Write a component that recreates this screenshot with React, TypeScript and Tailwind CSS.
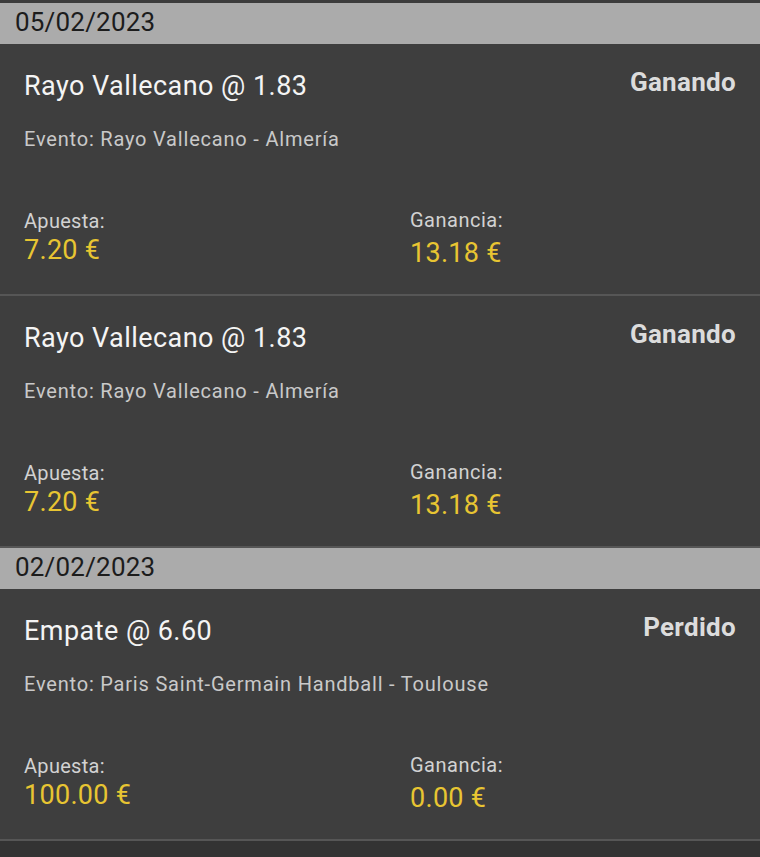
import React from 'react';

type Bet = {
  pick: string;
  odds: string;
  status: string;
  event: string;
  stake: string;
  profit: string;
};

type Day = {
  date: string;
  bets: Bet[];
};

const days: Day[] = [
  {
    date: '05/02/2023',
    bets: [
      { pick: 'Rayo Vallecano', odds: '1.83', status: 'Ganando', event: 'Rayo Vallecano - Almería', stake: '7.20', profit: '13.18' },
      { pick: 'Rayo Vallecano', odds: '1.83', status: 'Ganando', event: 'Rayo Vallecano - Almería', stake: '7.20', profit: '13.18' },
    ],
  },
  {
    date: '02/02/2023',
    bets: [
      { pick: 'Empate', odds: '6.60', status: 'Perdido', event: 'Paris Saint-Germain Handball - Toulouse', stake: '100.00', profit: '0.00' },
    ],
  },
];

function BetCard({ bet }: { bet: Bet }) {
  return (
    <div className="bg-[#3e3e3e] border-b-2 border-[#565656] px-6 pt-[26px] pb-[28px]">
      <div className="flex justify-between items-start">
        <div className="text-[27px] leading-[32px] tracking-[0.45px] text-[#f4f4f4]">
          {bet.pick} @ {bet.odds}
        </div>
        <div className="text-[26px] leading-[32px] font-bold tracking-[0.3px] text-[#dcdcdc] -mt-[4px]">{bet.status}</div>
      </div>
      <div className="mt-[25px] text-[20px] leading-[24px] tracking-[0.8px] text-[#c9c9c9]">Evento: {bet.event}</div>
      <div className="mt-[58px] flex items-start h-[57px]">
        <div className="w-[386px]">
          <div className="text-[20px] leading-[24px] tracking-[0.3px] text-[#d2d2d2]">Apuesta:</div>
          <div className="mt-px text-[27px] leading-[32px] tracking-[0.3px] text-[#e8c532]">{bet.stake} €</div>
        </div>
        <div className="-mt-[1px]">
          <div className="text-[20px] leading-[24px] tracking-[0.5px] text-[#d2d2d2]">Ganancia:</div>
          <div className="mt-[5px] text-[27px] leading-[32px] tracking-[0.3px] text-[#e8c532]">{bet.profit} €</div>
        </div>
      </div>
    </div>
  );
}

export default function App() {
  return (
    <div className="min-h-screen bg-[#333333] font-['Roboto',sans-serif]">
      <div className="h-[3px] bg-[#3c3c3c]" />
      {days.map((day) => (
        <div key={day.date}>
          <div className="h-[41px] bg-[#ababab] pl-[15px] flex items-center text-[26px] tracking-[0.2px] text-[#1c1c1c]">
            <span className="-mt-[2px]">{day.date}</span>
          </div>
          {day.bets.map((bet, i) => (
            <BetCard key={i} bet={bet} />
          ))}
        </div>
      ))}
    </div>
  );
}
